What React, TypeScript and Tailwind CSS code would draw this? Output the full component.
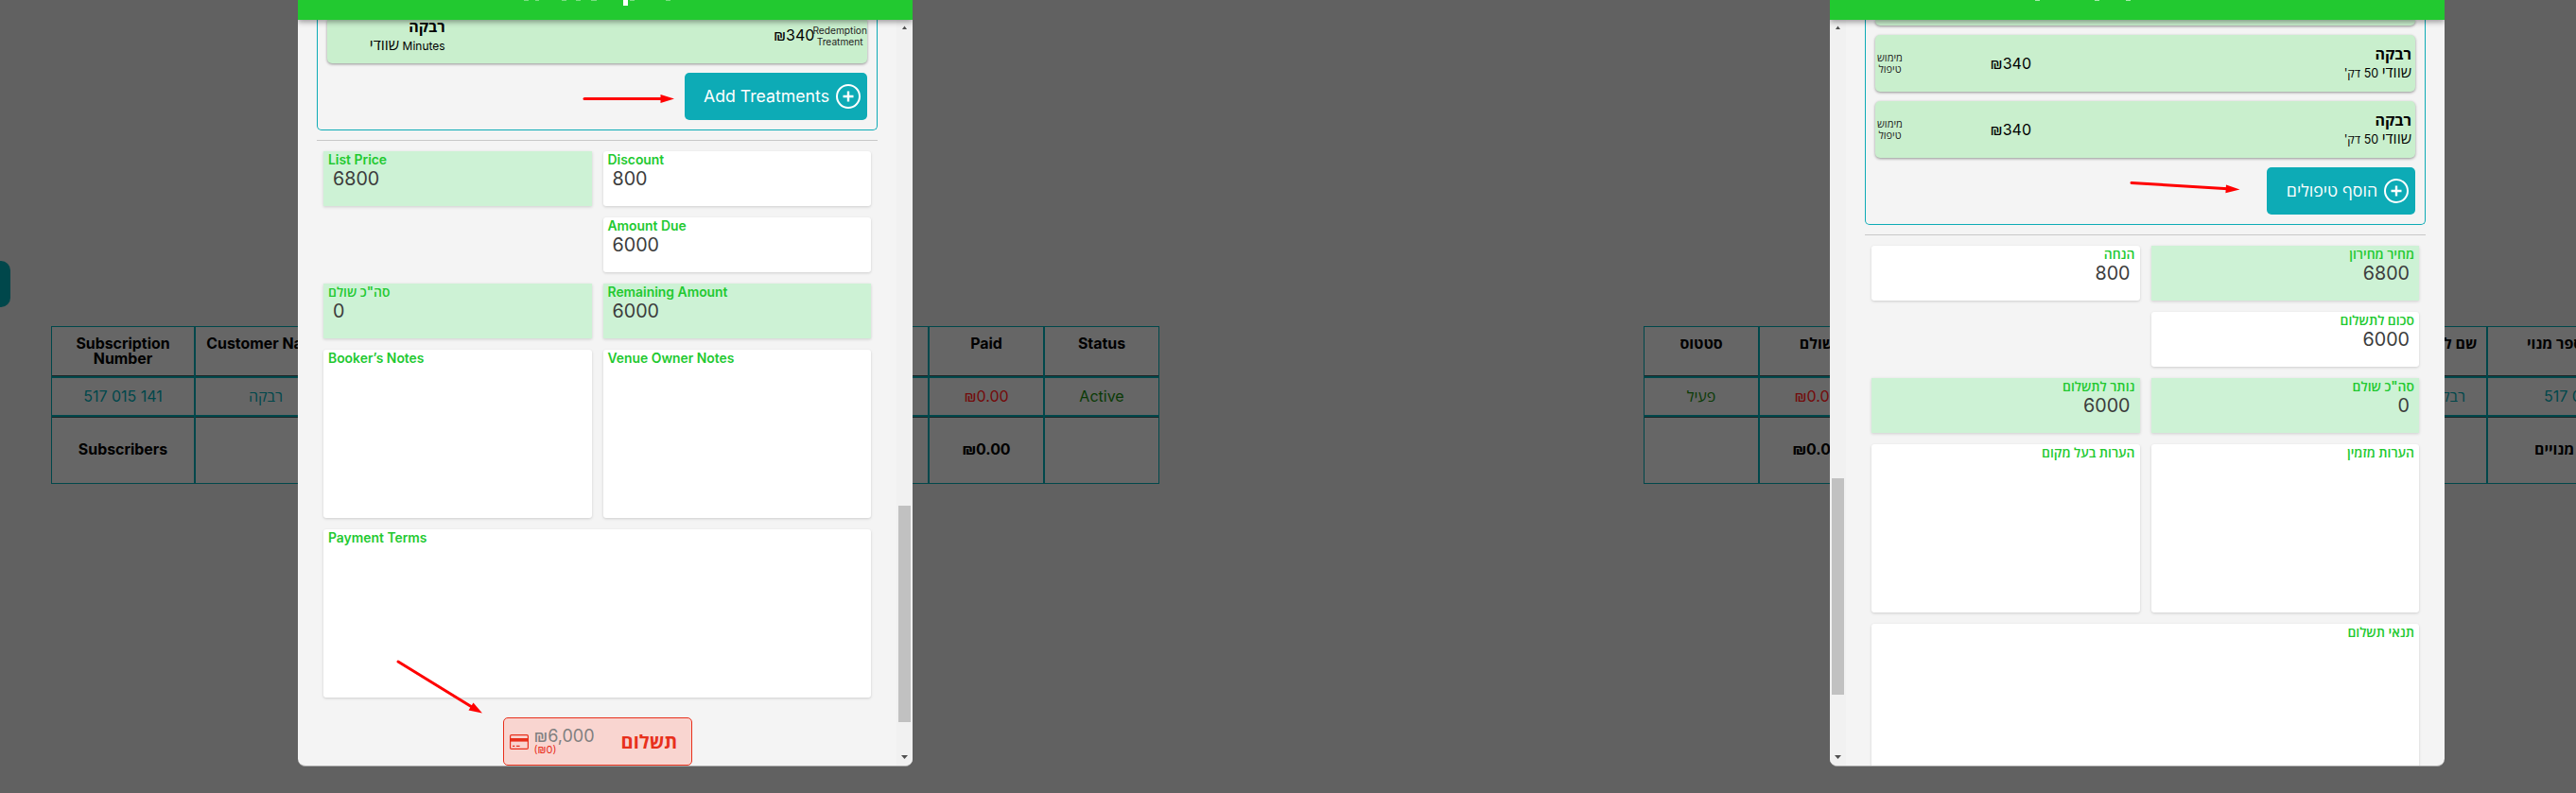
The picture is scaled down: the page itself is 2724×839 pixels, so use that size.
import React from "react";

type Col = {
  w: string;
  head: string;
  body?: string;
  foot?: string;
  color?: string;
  headPos?: string;
  bodyPos?: string;
  footPos?: string;
};

const leftCols: Col[] = [
  { w: "w-[152px]", head: "Subscription\nNumber", body: "517 015 141", foot: "Subscribers" },
  { w: "w-[150px]", head: "Customer Name", body: "רבקה" },
  { w: "w-[626px]", head: "" },
  { w: "w-[122px]", head: "Paid", body: "₪0.00", foot: "₪0.00", color: "text-[#730a0a]" },
  { w: "w-[120px]", head: "Status", body: "Active", color: "text-[#0a3a05]" },
];

const rightCols: Col[] = [
  { w: "w-[122px]", head: "סטטוס", body: "פעיל", color: "text-[#0a3a05]" },
  { w: "w-[122px]", head: "שולם", body: "₪0.00", foot: "₪0.00", color: "text-[#730a0a]" },
  { w: "w-[566px]", head: "" },
  { w: "w-[82px]", head: "שם לקוח", body: "רבקה" },
  {
    w: "w-[202px]",
    head: "מספר מנוי",
    body: "517 015 141",
    foot: 'סה"כ מנויים',
    headPos: "pl-[41px] text-left",
    bodyPos: "pl-[59px] text-left",
    footPos: "pl-[49px] text-left",
  },
];

function SubsTable({ cols }: { cols: Col[] }) {
  return (
    <div className="flex h-[167px] shrink-0 border border-[#00474b] bg-[#666] text-[16px] text-black">
      {cols.map((c, i) => (
        <div
          key={i}
          className={`${c.w} flex shrink-0 flex-col text-center whitespace-pre ${i < cols.length - 1 ? "border-r-2 border-[#00474b]" : ""}`}
        >
          <div className={`h-[51px] pt-[10px] text-[15.9px] leading-4 font-bold ${c.headPos ?? ""}`}>{c.head}</div>
          <div className="h-px bg-[#1c2526]" />
          <div className={`h-[43px] border-y-2 border-[#00474b] leading-[39px] ${c.color ?? "text-[#00474b]"} ${c.bodyPos ?? ""}`}>{c.body}</div>
          <div className="h-px bg-[#1c2526]" />
          <div className={`flex-1 text-[15.9px] leading-[67px] font-bold ${c.footPos ?? ""}`}>{c.foot}</div>
        </div>
      ))}
    </div>
  );
}

function Field({ label, value, green, tall }: { label: string; value?: string; green?: boolean; tall?: boolean }) {
  return (
    <div
      className={`${tall ? "h-[178px]" : "h-[58px]"} px-[5px] shadow-[0_1px_3px_rgba(0,0,0,0.16)] ${green ? "bg-[#cdf2d5]" : "rounded-[3px] bg-white"}`}
    >
      <div className="text-[13.9px] leading-[19px] font-semibold text-[#22c930]">{label}</div>
      {value && <div className="px-[5px] text-[19.7px] leading-[21px] text-[#3c3c3c]">{value}</div>}
    </div>
  );
}

function PlusCircle() {
  return (
    <svg width="28" height="28" viewBox="0 0 28 28" fill="none" stroke="white" strokeWidth="2" className="shrink-0">
      <circle cx="14" cy="14" r="12" />
      <path d="M14 8.5v11M8.5 14h11" strokeWidth="2.4" />
    </svg>
  );
}

function AddButton({ label, className }: { label: string; className: string }) {
  return (
    <button className={`${className} flex h-[50px] items-center justify-end gap-[6px] rounded-[5px] bg-[#0dabb6] pr-[6px] text-[17.7px] whitespace-nowrap text-white`} dir="ltr">
      <span>{label}</span>
      <PlusCircle />
    </button>
  );
}

function TreatmentHe() {
  return (
    <div className="flex h-[60px] items-center rounded-[5px] bg-[#c9efcd] shadow-[0_1px_3px_rgba(0,0,0,0.4)]" dir="rtl">
      <div className="w-[402px] pr-[4px] leading-[19px] text-black">
        <div className="text-[16px] font-bold">רבקה</div>
        <div className="text-[12.5px]"><span className="text-[16px]">שוודי</span> 50 דק'</div>
      </div>
      <div className="w-[134px] pr-[4px] text-right text-[16px] text-black"><span dir="ltr">₪340</span></div>
      <div className="w-[35px] pr-[4px] text-center text-[11px] leading-3 text-[#222]">מימוש טיפול</div>
    </div>
  );
}

function ScrollBar({ topSpace }: { topSpace: string }) {
  return (
    <div className="flex w-[17px] shrink-0 flex-col items-center bg-[#f1f1f1]">
      <svg width="7" height="4" viewBox="0 0 7 4" className="mt-[6px] shrink-0"><path d="M3.5 0.5 6 4H1z" fill="#505050" /></svg>
      <div className={`${topSpace} shrink-0`} />
      <div className="h-[229px] w-[13px] shrink-0 bg-[#c1c1c1]" />
      <div className="flex-1" />
      <svg width="7" height="4" viewBox="0 0 7 4" className="mb-[7px] shrink-0"><path d="M3.5 4 7 0H0z" fill="#505050" /></svg>
    </div>
  );
}

function Header({ marks }: { marks: string[] }) {
  return (
    <div className="relative z-10 flex h-[20.5px] shrink-0 bg-[#22c930] shadow-[0_2px_6px_rgba(0,0,0,0.4)]">
      {marks.map((m, i) => (
        <span key={i} className={`${m} shrink-0`} />
      ))}
    </div>
  );
}

function CardIcon() {
  return (
    <svg width="20" height="16" viewBox="0 0 20 16" fill="none" stroke="#e8301c">
      <rect x="0.6" y="0.6" width="18.8" height="14.8" rx="1.2" strokeWidth="1.2" />
      <path d="M0.5 5.8h19" strokeWidth="3.6" />
      <path d="M3 12.3h2.4M7 12.3h3.6" strokeWidth="1.2" />
    </svg>
  );
}

function LeftModal() {
  return (
    <section className="absolute top-0 left-[315px] flex h-[811px] w-[650px] flex-col overflow-hidden rounded-b-lg border-b border-[#a6a6a6] bg-[#f4f4f4]">
      <Header
        marks={[
          "ml-[239px] h-px w-[5px] bg-white/40",
          "ml-[7px] h-px w-[4px] bg-white/40",
          "ml-[24px] h-px w-[5px] bg-white/40",
          "ml-[10px] h-px w-[5px] bg-white/40",
          "ml-[11px] h-px w-[6px] bg-white/40",
          "ml-[28px] h-[6px] w-[5px] bg-white",
          "ml-[2px] h-px w-[5px] bg-white/40",
          "ml-[33px] h-px w-[5px] bg-white/40",
        ]}
      />
      <div className="flex min-h-0 flex-1">
        <div className="w-[633px] pl-5">
          <div className="h-[117.5px] w-[593px] rounded-b-[5px] border border-t-0 border-[#0dabb6] px-[10px]">
            <div className="flex h-[46.5px] rounded-b-[5px] bg-[#c9efcd] shadow-[0_1px_3px_rgba(0,0,0,0.4)]">
              <div className="-mt-[2px] w-[126px] text-right leading-[19px] text-black">
                <div className="text-[16px] font-bold">רבקה</div>
                <div className="text-[12px]" dir="ltr"><span className="text-[16px]">שוודי</span> Minutes</div>
              </div>
              <div className="w-[395px] pt-[6px] text-right text-[16px] leading-5 text-black">₪340</div>
              <div className="-ml-[2px] w-[58px] pt-[5px] text-center text-[10.2px] leading-3 text-[#222]">Redemption Treatment</div>
            </div>
            <div className="flex justify-end pt-[10px]">
              <AddButton label="Add Treatments" className="w-[193px]" />
            </div>
          </div>
          <div className="mt-[10px] h-px w-[593px] bg-[#c8c8c8]" />
          <div className="mt-[11px] grid w-[593px] grid-cols-2 gap-3 px-[7px]">
            <Field label="List Price" value="6800" green />
            <Field label="Discount" value="800" />
            <div />
            <Field label="Amount Due" value="6000" />
            <Field label={'סה"כ שולם'} value="0" green />
            <Field label="Remaining Amount" value="6000" green />
            <Field label="Booker’s Notes" tall />
            <Field label="Venue Owner Notes" tall />
            <div className="col-span-2"><Field label="Payment Terms" tall /></div>
          </div>
          <div className="mt-[21px] flex w-[593px] justify-center">
            <button className="flex h-[51px] w-[200px] items-center rounded-[5px] border border-[#e8301c] bg-[#f9d5d0] pl-[6px]" dir="ltr">
              <CardIcon />
              <span className="ml-[6px] w-[92px] text-left">
                <span className="block text-[18px] leading-[18px] text-[#808080]">₪6,000</span>
                <span className="block text-[11px] leading-[11px] text-[#e8301c]">(₪0)</span>
              </span>
              <span className="text-[20px] leading-[22px] font-bold text-[#e8301c]">תשלום</span>
            </button>
          </div>
        </div>
        <ScrollBar topSpace="h-[504px]" />
      </div>
    </section>
  );
}

function RightModal() {
  return (
    <section className="absolute top-0 left-[1935px] flex h-[811px] w-[650px] flex-col overflow-hidden rounded-b-lg border-b border-[#a6a6a6] bg-[#f4f4f4]">
      <Header
        marks={[
          "ml-[217px] h-px w-[5px] bg-white/60",
          "ml-[58px] h-px w-[5px] bg-white/60",
          "ml-[28px] h-px w-[5px] bg-white/60",
        ]}
      />
      <div className="flex min-h-0 flex-1">
        <ScrollBar topSpace="h-[475px]" />
        <div className="w-[633px] pl-5" dir="ltr">
          <div className="h-[217.5px] w-[593px] rounded-b-[5px] border border-t-0 border-[#0dabb6] px-[10px]">
            <div className="h-[6.5px] rounded-b-[5px] bg-[#c9efcd] shadow-[0_1px_3px_rgba(0,0,0,0.4)]" />
            <div className="flex flex-col gap-[10px] pt-[10px]">
              <TreatmentHe />
              <TreatmentHe />
              <div className="flex justify-end">
                <AddButton label="הוסף טיפולים" className="w-[157px]" />
              </div>
            </div>
          </div>
          <div className="mt-[10px] h-px w-[593px] bg-[#c8c8c8]" />
          <div className="mt-[11px] grid w-[593px] grid-cols-2 gap-3 px-[7px]" dir="rtl">
            <Field label="מחיר מחירון" value="6800" green />
            <Field label="הנחה" value="800" />
            <Field label="סכום לתשלום" value="6000" />
            <div />
            <Field label={'סה"כ שולם'} value="0" green />
            <Field label="נותר לתשלום" value="6000" green />
            <Field label="הערות מזמין" tall />
            <Field label="הערות בעל מקום" tall />
            <div className="col-span-2"><Field label="תנאי תשלום" tall /></div>
          </div>
        </div>
      </div>
    </section>
  );
}

function Arrows() {
  return (
    <svg className="absolute inset-0" width="2724" height="839" fill="#ff0000" stroke="#ff0000" strokeWidth="3" strokeLinecap="round">
      <path d="M618 104.5H700" />
      <path d="M713 104.5 698.5 100v9z" stroke="none" />
      <path d="M421 700 499 748" />
      <path d="M510 754.5 500.5 743.5 495.5 751.5z" stroke="none" />
      <path d="M2254 193.5 2356 199.8" />
      <path d="M2368.5 200.6 2354 195.4 2353.4 204.2z" stroke="none" />
    </svg>
  );
}

export default function App() {
  return (
    <main className="relative h-[839px] w-[2724px] overflow-hidden bg-[#616161] font-[Inter,'Open_Sans',sans-serif]">
      <div className="absolute top-[276px] left-0 h-[49px] w-[11px] rounded-r-[10px] bg-[#00474b]" />
      <div className="flex gap-[512px] pt-[345px] pl-[54px]">
        <SubsTable cols={leftCols} />
        <SubsTable cols={rightCols} />
      </div>
      <LeftModal />
      <RightModal />
      <Arrows />
    </main>
  );
}
